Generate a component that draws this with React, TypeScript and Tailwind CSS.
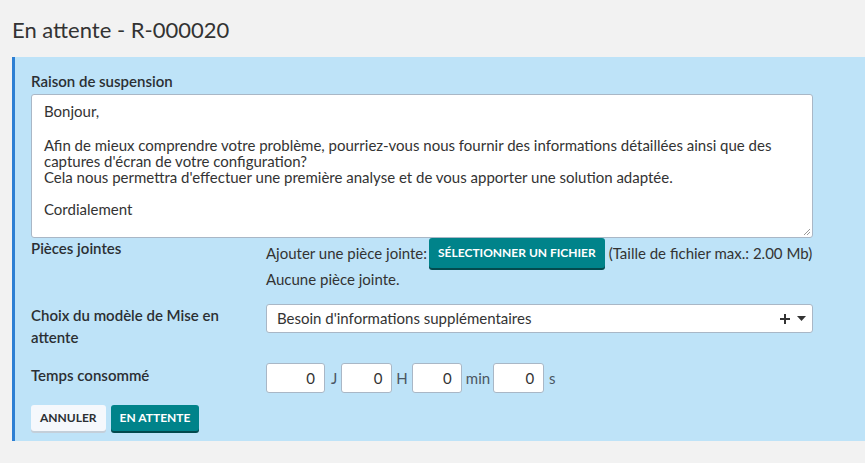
import React from "react";

export default function App() {
  const font = { fontFamily: "Lato, 'Open Sans', sans-serif" };
  return (
    <div className="w-[865px] h-[463px] bg-[#f2f2f2] text-[#333] overflow-hidden" style={font}>
      <h1 className="pl-[12px] pt-[17px] text-[22px] leading-[26px] text-[#333] font-normal">En attente - R-000020</h1>
      <div className="ml-[12px] mt-[14px] border-l-[3px] border-[#2d7fd3] bg-[#bee3f8] pl-[16px] pr-[52px] pt-[15px] pb-[10px]">
        <div className="text-[15px] font-semibold leading-[18px] text-[#2b2f33]">Raison de suspension</div>
        <div className="relative mt-[4px] h-[144px] w-[782px] rounded-[3px] border border-[#a9b7c6] bg-white px-[12px] pt-[8px] text-[15px] leading-[16px] text-[#333]">
          <p>Bonjour,</p>
          <p className="h-[18px]"></p>
          <p className="whitespace-nowrap">Afin de mieux comprendre votre problème, pourriez-vous nous fournir des informations détaillées ainsi que des</p>
          <p>captures d'écran de votre configuration?</p>
          <p>Cela nous permettra d'effectuer une première analyse et de vous apporter une solution adaptée.</p>
          <p className="h-[16px]"></p>
          <p>Cordialement</p>
          <svg className="absolute right-[1px] bottom-[1px]" width="8" height="8" viewBox="0 0 8 8">
            <path d="M7 1L1 7M7 4L4 7" stroke="#999" strokeWidth="1" />
          </svg>
        </div>
        <div className="flex">
          <div className="w-[235px] shrink-0 pt-[1px] text-[15px] font-semibold leading-[18px] text-[#2b2f33]">Pièces jointes</div>
          <div className="flex flex-col text-[15px]">
            <div className="flex items-center whitespace-nowrap">
              <span>Ajouter une pièce jointe:</span>
              <button className="ml-[2px] h-[30px] shrink-0 whitespace-nowrap rounded-[3px] bg-[#00838a] px-[9px] text-[12px] font-bold text-white shadow-[0_2px_0_#034a4e]">SÉLECTIONNER UN FICHIER</button>
              <span className="ml-[4px]">(Taille de fichier max.: 2.00 Mb)</span>
            </div>
            <div className="mt-[2px] leading-[18px]">Aucune pièce jointe.</div>
          </div>
        </div>
        <div className="mt-[16px] flex">
          <div className="w-[235px] shrink-0 pr-[20px] text-[15px] font-semibold leading-[22px] text-[#2b2f33]">Choix du modèle de Mise en attente</div>
          <div className="flex h-[29px] w-[547px] items-center justify-between rounded-[3px] border border-[#a9b7c6] bg-white pl-[10px] pr-[6px] text-[15px]">
            <span>Besoin d'informations supplémentaires</span>
            <span className="flex items-center gap-[6px]">
              <svg width="12" height="12" viewBox="0 0 12 12"><path d="M6 1V11M1 6H11" stroke="#333" strokeWidth="2" /></svg>
              <svg width="9" height="5" viewBox="0 0 9 5"><path d="M0 0H9L4.5 5Z" fill="#333" /></svg>
            </span>
          </div>
        </div>
        <div className="mt-[15px] flex">
          <div className="w-[235px] shrink-0 pt-[1px] text-[15px] font-semibold leading-[22px] text-[#2b2f33]">Temps consommé</div>
          <div className="flex items-center text-[15px] text-[#4a5663]">
            <div className="flex h-[30px] w-[59px] items-center justify-end rounded-[3px] border border-[#a9b7c6] bg-white pr-[9px] text-[#333]">0</div>
            <span className="ml-[6px] mr-[4px]">J</span>
            <div className="flex h-[30px] w-[51px] items-center justify-end rounded-[3px] border border-[#a9b7c6] bg-white pr-[9px] text-[#333]">0</div>
            <span className="ml-[4px] mr-[4px]">H</span>
            <div className="flex h-[30px] w-[50px] items-center justify-end rounded-[3px] border border-[#a9b7c6] bg-white pr-[9px] text-[#333]">0</div>
            <span className="ml-[4px] mr-[3px]">min</span>
            <div className="flex h-[30px] w-[51px] items-center justify-end rounded-[3px] border border-[#a9b7c6] bg-white pr-[9px] text-[#333]">0</div>
            <span className="ml-[5px]">s</span>
          </div>
        </div>
        <div className="mt-[12px] flex gap-[5px]">
          <button className="h-[26px] rounded-[3px] bg-[#f5f8fc] px-[9px] text-[12px] font-bold text-[#2b2f33] shadow-[0_2px_0_#c4cfd9]">ANNULER</button>
          <button className="h-[26px] rounded-[3px] bg-[#00838a] px-[9px] text-[12px] font-bold text-white shadow-[0_2px_0_#034a4e]">EN ATTENTE</button>
        </div>
      </div>
    </div>
  );
}
